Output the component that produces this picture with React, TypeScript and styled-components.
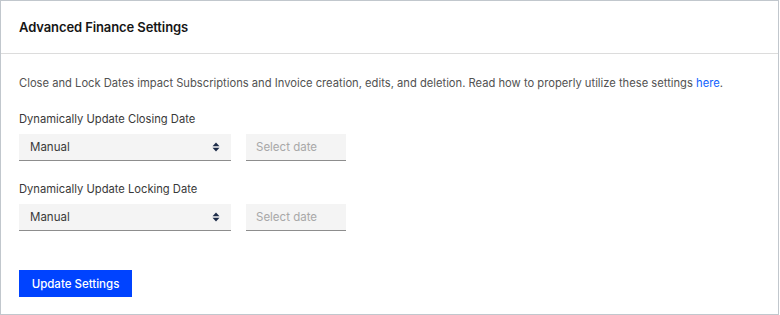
import React from "react";
import styled, { createGlobalStyle } from "styled-components";

const Global = createGlobalStyle`
  html, body { margin: 0; padding: 0; background: #ffffff; }
  body { font-family: "Inter Variable", Inter, "Noto Sans", sans-serif; -webkit-font-smoothing: antialiased; }
  * { box-sizing: border-box; }
`;

const Card = styled.section`
  width: 779px;
  height: 315px;
  border: 1px solid #c1c7cd;
  background: #ffffff;
  display: flex;
  flex-direction: column;
`;

const Header = styled.header`
  height: 53px;
  border-bottom: 1px solid #dcdcdc;
  display: flex;
  align-items: center;
  padding: 0 18px;
`;

const Title = styled.h2`
  margin: 0;
  font-size: 13px;
  font-weight: 600;
  color: #161616;
  letter-spacing: -0.1px;
`;

const Body = styled.div`
  padding: 21px 18px 0;
  display: flex;
  flex-direction: column;
`;

const Description = styled.p`
  margin: 0 0 20px;
  font-size: 11.2px;
  line-height: 16px;
  color: #525252;
`;

const Link = styled.a`
  color: #0f62fe;
  text-decoration: none;
`;

const Field = styled.div<{ $mb: number }>`
  display: flex;
  flex-direction: column;
  gap: 7px;
  margin-bottom: ${(p) => p.$mb}px;
`;

const Label = styled.label`
  font-size: 11.2px;
  line-height: 16px;
  color: #393939;
`;

const Row = styled.div`
  display: flex;
  gap: 15px;
`;

const SelectBox = styled.div`
  width: 212px;
  height: 27px;
  background: #f4f4f4;
  border-bottom: 1px solid #8d8d8d;
  display: flex;
  align-items: center;
  justify-content: space-between;
  padding: 0 11px 0 11px;
  font-size: 11.5px;
  color: #393939;
`;

const DateBox = styled.div`
  width: 100px;
  height: 27px;
  background: #f4f4f4;
  border-bottom: 1px solid #8d8d8d;
  display: flex;
  align-items: center;
  padding: 0 10px;
  font-size: 11.5px;
  color: #a8a8a8;
`;

const Button = styled.button`
  align-self: flex-start;
  width: 113px;
  height: 27px;
  border: none;
  background: #0043ff;
  color: #ffffff;
  font-family: inherit;
  font-size: 11.5px;
  font-weight: 500;
  padding: 0;
  cursor: pointer;
`;

const Caret = () => (
  <svg width="8" height="10" viewBox="0 0 8 10">
    <path d="M4 0.5 L7.5 4.2 H0.5 Z" fill="#1c2b48" />
    <path d="M4 9.5 L7.5 5.8 H0.5 Z" fill="#1c2b48" />
  </svg>
);

const DateField = ({ label, mb }: { label: string; mb: number }) => (
  <Field $mb={mb}>
    <Label>{label}</Label>
    <Row>
      <SelectBox>
        <span>Manual</span>
        <Caret />
      </SelectBox>
      <DateBox>Select date</DateBox>
    </Row>
  </Field>
);

export default function App() {
  return (
    <>
      <Global />
      <Card>
        <Header>
          <Title>Advanced Finance Settings</Title>
        </Header>
        <Body>
          <Description>
            Close and Lock Dates impact Subscriptions and Invoice creation, edits, and deletion. Read how to properly
            utilize these settings <Link href="#">here</Link>.
          </Description>
          <DateField label="Dynamically Update Closing Date" mb={20} />
          <DateField label="Dynamically Update Locking Date" mb={39} />
          <Button>Update Settings</Button>
        </Body>
      </Card>
    </>
  );
}
